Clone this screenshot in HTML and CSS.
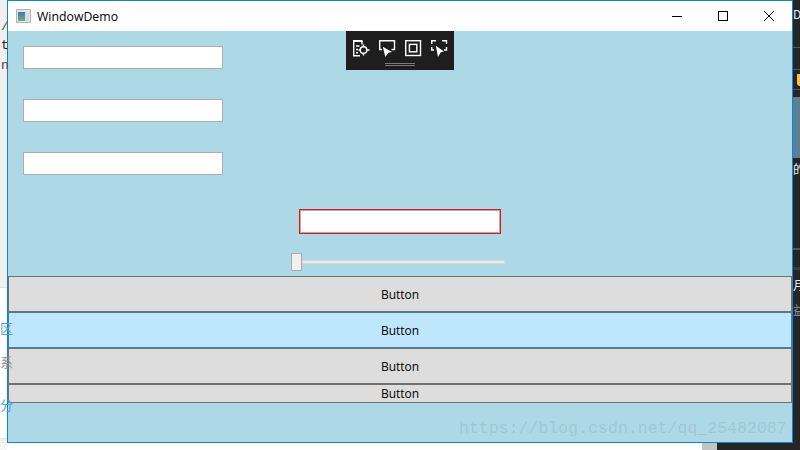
FILE: index.html
```html
<!DOCTYPE html>
<html lang="en">
<head>
<meta charset="utf-8">
<title>WindowDemo</title>
<link rel="stylesheet" href="styles.css">
</head>
<body>
<div class="desktop">
  <div class="left-bg">
    <span class="code c1">/</span>
    <span class="code c2">t</span>
    <span class="code c3">n</span>
    <span class="frag f1">区</span>
    <span class="frag f2">系</span>
    <span class="frag f3">分</span>
  </div>
  <div class="right-bg">
    <span class="rule l1"></span>
    <span class="rule l2"></span>
    <span class="rule l3"></span>
    <span class="rule l4"></span>
    <span class="rule l5"></span>
    <span class="rt r1">D</span>
    <span class="shield"></span>
    <span class="photo"></span>
    <span class="rt r2">的</span>
    <span class="rt r3">月</span>
    <span class="rt r4">益</span>
  </div>
  <div class="bottom-bg"><span class="scroll"></span></div>

  <div class="window">
    <div class="titlebar">
      <svg class="app-icon" width="15" height="14" viewBox="0 0 15 14">
        <defs>
          <linearGradient id="pane" x1="0" y1="0" x2="0" y2="1">
            <stop offset="0" stop-color="#3f78a8"/>
            <stop offset="1" stop-color="#6fae8f"/>
          </linearGradient>
        </defs>
        <rect x="0.500" y="0.500" width="14" height="13" fill="#e4e6e6" stroke="#b4b4b4"/>
        <rect x="2" y="3" width="7" height="9" fill="url(#pane)"/>
        <rect x="10" y="3" width="3" height="9" fill="#d5dede"/>
      </svg>
      <span class="title">WindowDemo</span>
      <div class="caption">
        <svg width="10" height="10" viewBox="0 0 10 10"><path d="M0 5.500H10" stroke="#000" fill="none"/></svg>
        <svg width="10" height="10" viewBox="0 0 10 10"><rect x="0.500" y="0.500" width="9" height="9" stroke="#000" fill="none"/></svg>
        <svg width="10" height="10" viewBox="0 0 10 10"><path d="M0 0L10 10M10 0L0 10" stroke="#000" fill="none"/></svg>
      </div>
    </div>
    <div class="content">
      <div class="boxes">
        <input class="box" type="text">
        <input class="box" type="text">
        <input class="box" type="text">
      </div>
      <div class="center">
        <input class="red-box" type="text">
        <div class="slider">
          <span class="thumb"></span>
          <span class="track"></span>
        </div>
      </div>
      <div class="buttons">
        <button class="btn tall">Button</button>
        <button class="btn tall hover">Button</button>
        <button class="btn tall">Button</button>
        <button class="btn short">Button</button>
      </div>
      <div class="toolbar">
        <div class="tools">
          <svg width="17" height="17" viewBox="0 0 17 17" fill="none" stroke="#fff" stroke-width="1.400">
            <path d="M0 1H9.500" stroke-width="2"/>
            <path d="M9 1V4.500"/>
            <path d="M0.700 1V15.800H7"/>
            <path d="M3 6H6.500M3 9.500H5M3 12.800H5"/>
            <circle cx="10.500" cy="10" r="3.300"/>
            <path d="M10.500 4.500V7M10.500 13V15.500M5.500 10H7.500M13.500 10H16.500"/>
          </svg>
          <svg width="17" height="17" viewBox="0 0 17 17" fill="none" stroke="#fff" stroke-width="1.400">
            <path d="M3 9.500H0.700V0.700H15.500V9.500H12.500"/>
            <path d="M3.800 6.800L13 12L9.300 12.800L6.300 17Z" fill="#fff" stroke="none"/>
          </svg>
          <svg width="17" height="17" viewBox="0 0 17 17" fill="none" stroke="#fff" stroke-width="1.400">
            <rect x="0.700" y="0.700" width="14.800" height="14.800"/>
            <rect x="4.400" y="4.400" width="7.400" height="7.400"/>
          </svg>
          <svg width="17" height="17" viewBox="0 0 17 17" fill="none" stroke="#fff" stroke-width="1.400">
            <path d="M0.700 4V0.700H5M11 0.700H15.500V4M0.700 7V10H3M13 10H15.500V7"/>
            <path d="M4.800 5.800L13 11.500L9.800 12.300L7 17Z" fill="#fff" stroke="none"/>
          </svg>
        </div>
        <div class="grip"></div>
      </div>
      <span class="watermark">https://blog.csdn.net/qq_25482087</span>
    </div>
  </div>
</div>
</body>
</html>
```
FILE: styles.css
```css
* { box-sizing: border-box; }
html, body { margin: 0; padding: 0; }
body { width: 800px; height: 450px; overflow: hidden; font-family: "Segoe UI", "Open Sans", "Liberation Sans", sans-serif; }

.desktop { position: relative; width: 800px; height: 450px; background: #fff; overflow: hidden; }

.left-bg { position: absolute; left: 0; top: 0; width: 8px; height: 450px; background: #f0f0f0; }
.left-bg::after { content: ""; position: absolute; left: 0; top: 287px; width: 8px; height: 150px; background: #fff; border-top: 1px solid #e0e0e0; border-bottom: 1px solid #e0e0e0; }
.code { position: absolute; left: 1px; font: 13px/14px "Liberation Mono", monospace; color: #333; z-index: 1; }
.c1 { top: 20px; color: #5a4a3a; }
.c2 { top: 39px; color: #222; }
.c3 { top: 59px; color: #444; }
.frag { position: absolute; left: 0; font: 13px/14px "Noto Sans CJK SC", sans-serif; color: #4aa3df; z-index: 1; }
.f1 { top: 321px; }
.f2 { top: 355px; color: #999; }
.f3 { top: 398px; }

.right-bg { position: absolute; left: 793px; top: 0; width: 7px; height: 450px; background: #252526; overflow: hidden; }
.rule { position: absolute; left: 0; width: 7px; height: 1px; background: #555; }
.l1 { top: 47px; }
.l2 { top: 69px; }
.l3 { top: 89px; }
.l4 { top: 248px; height: 2px; }
.l5 { top: 267px; height: 3px; background: #3a3a3a; }
.rt { position: absolute; left: 0; font: 12px/14px "Noto Sans CJK SC", sans-serif; color: #eee; }
.r1 { top: 7px; }
.r2 { top: 162px; }
.r3 { top: 278px; }
.r4 { top: 303px; color: #999; }
.shield { position: absolute; left: 4px; top: 74px; width: 3px; height: 12px; background: #f0c14b; border-radius: 0 0 0 3px; }
.photo { position: absolute; left: 0; top: 97px; width: 7px; height: 61px; background: #5b7f94; }

.bottom-bg { position: absolute; left: 0; top: 443px; width: 800px; height: 7px; background: #fff; }
.bottom-bg::before { content: ""; position: absolute; left: 0; top: 0; width: 7px; height: 7px; background: #f8f8f8; }
.bottom-bg::after { content: ""; position: absolute; left: 717px; top: 0; width: 83px; height: 7px; background: #252526; }
.scroll { position: absolute; left: 702px; top: 0; width: 15px; height: 7px; background: #c4c4c4; }

.window { position: absolute; left: 7px; top: 0; width: 786px; height: 443px; border: 1px solid #1083d8; background: #add8e6; display: flex; flex-direction: column; }

.titlebar { height: 30px; background: #fff; display: flex; align-items: center; padding-left: 8px; flex: none; }
.app-icon { flex: none; margin-bottom: 1px; }
.title { margin-left: 6px; font-size: 12.300px; color: #000; }
.caption { margin-left: auto; display: flex; align-items: center; gap: 36px; padding-right: 18px; }

.content { position: relative; flex: 1; display: flex; flex-direction: column; }

.boxes { display: flex; flex-direction: column; gap: 30px; padding: 15px 0 0 15px; }
.box { display: block; width: 200px; height: 23px; border: 1px solid #abadb3; background: #fff; padding: 0; margin: 0; }

.center { display: flex; flex-direction: column; align-items: flex-start; margin-left: 283px; }
.red-box { display: block; margin: 34px 0 0 8px; width: 202px; height: 25px; border: 1px solid #ee1111; outline: 1px solid #abadb3; outline-offset: -2px; background: #fff; padding: 0; }
.slider { display: flex; align-items: center; height: 18px; margin-top: 19px; }
.thumb { width: 11px; height: 18px; background: #f0f0f0; border: 1px solid #acacac; flex: none; }
.track { width: 203px; height: 4px; background: #e7eaea; border: 1px solid #d6d6d6; flex: none; }

.buttons { display: flex; flex-direction: column; margin-top: 5px; }
.btn { display: block; width: 784px; margin: 0; padding: 0; border: 1px solid #707070; background: #dddddd; font-family: inherit; font-size: 12px; color: #000; }
.tall { height: 36px; }
.short { height: 19px; line-height: 15px; }
.hover { background: #bee6fd; border-color: #3c7fb1; }

.toolbar { position: absolute; left: 338px; top: 0; width: 108px; height: 39px; background: #1e1e1e; display: flex; flex-direction: column; }
.tools { display: flex; gap: 9px; padding: 9px 0 0 7px; }
.tools svg { display: block; flex: none; }
.grip { width: 30px; height: 3px; margin: 6px 0 0 39px; border-top: 1px solid #7a7a7a; border-bottom: 1px solid #7a7a7a; }

.watermark { position: absolute; left: 451px; top: 387px; font: 16.560px/22px "Liberation Mono", monospace; color: rgba(130, 130, 130, 0.22); white-space: nowrap; }
```
